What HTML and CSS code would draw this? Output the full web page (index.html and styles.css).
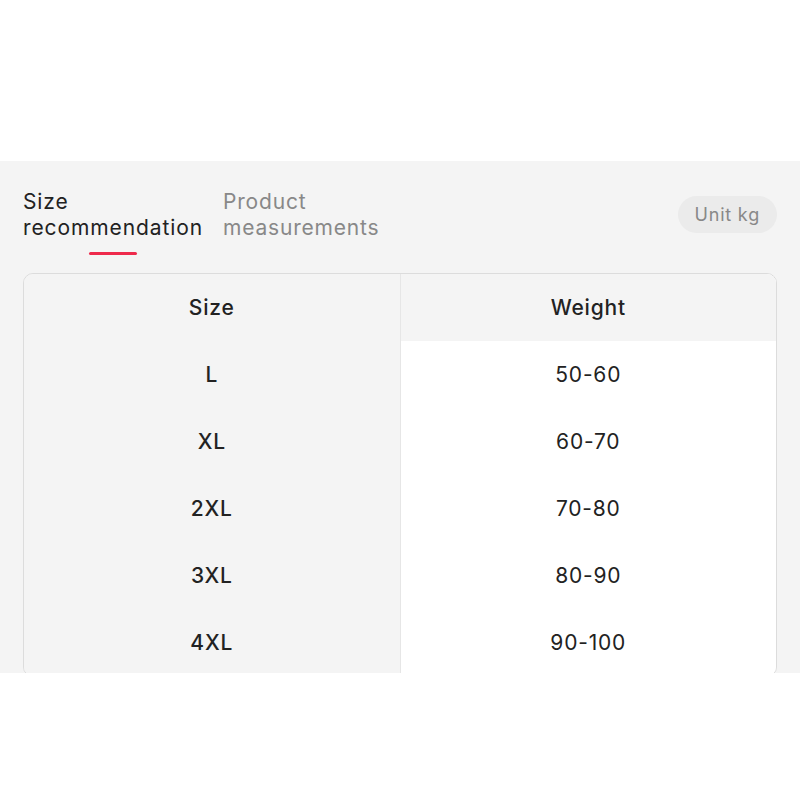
FILE: index.html
```html
<!DOCTYPE html>
<html lang="en">
<head>
<meta charset="UTF-8">
<meta name="viewport" content="width=device-width, initial-scale=1.0">
<title>Size chart</title>
<link rel="stylesheet" href="styles.css">
</head>
<body>

<div class="top"></div>

<div class="panel">
  <div class="tabs-row">
    <div class="tabs">
      <div class="tab active">Size<br>recommendation</div>
      <div class="tab">Product<br>measurements</div>
    </div>
    <div class="unit">Unit kg</div>
  </div>

  <div class="chart">
    <div class="col col-size">
      <div class="cell head">Size</div>
      <div class="cell">L</div>
      <div class="cell">XL</div>
      <div class="cell">2XL</div>
      <div class="cell">3XL</div>
      <div class="cell">4XL</div>
    </div>
    <div class="col col-weight">
      <div class="cell head">Weight</div>
      <div class="cell">50-60</div>
      <div class="cell">60-70</div>
      <div class="cell">70-80</div>
      <div class="cell">80-90</div>
      <div class="cell">90-100</div>
    </div>
  </div>
</div>

</body>
</html>
```

FILE: styles.css
```css
body {
  margin: 0;
  font-family: Inter, 'Noto Sans', sans-serif;
  background: #fff;
  color: #222;
  letter-spacing: 0.8px;
}
.top {
  height: 161px;
}
.panel {
  height: 512px;
  background: #f4f4f4;
  padding: 0 23px;
  overflow: hidden;
  box-sizing: border-box;
}
.tabs-row {
  display: flex;
  justify-content: space-between;
  align-items: flex-start;
  padding-top: 28px;
  height: 112px;
  box-sizing: border-box;
}
.tabs {
  display: flex;
  gap: 20px;
}
.tab {
  position: relative;
  font-size: 21px;
  line-height: 26px;
  color: #888;
}
.tab.active {
  color: #222;
  letter-spacing: 0.9px;
}
.tab.active::after {
  content: '';
  position: absolute;
  left: 50%;
  bottom: -14px;
  width: 48px;
  height: 3px;
  margin-left: -24px;
  border-radius: 2px;
  background: #ee2a4b;
}
.unit {
  margin-top: 7px;
  background: #ebebeb;
  color: #888;
  font-size: 18px;
  line-height: 37px;
  padding: 0 17px;
  border-radius: 19px;
}
.chart {
  display: flex;
  border: 1px solid #dcdcdc;
  border-radius: 10px;
  overflow: hidden;
}
.col {
  flex: 1;
}
.col-size {
  background: #f4f4f4;
  border-right: 1px solid #e6e6e6;
}
.col-weight {
  background: #fff;
}
.cell {
  height: 67px;
  display: flex;
  align-items: center;
  justify-content: center;
  font-size: 21px;
  font-weight: 500;
}
.col-weight .cell {
  font-weight: 400;
}
.col-weight .head {
  background: #f4f4f4;
  font-weight: 500;
}
```
